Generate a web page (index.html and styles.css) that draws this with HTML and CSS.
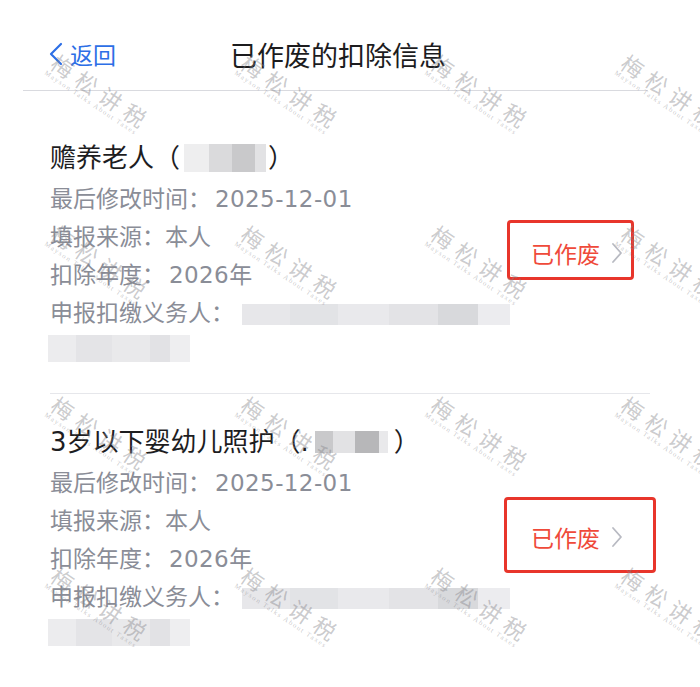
FILE: index.html
```html
<!DOCTYPE html>
<html lang="zh-CN">
<head>
    <meta charset="UTF-8">
    <meta name="viewport" content="width=device-width, initial-scale=1.0">
    <title>已作废的扣除信息</title>
    <link rel="stylesheet" href="styles.css">
</head>
<body>
    <div class="screen">
        <header class="nav">
            <a class="back" href="#">
                <svg class="back-icon" width="16" height="24" viewBox="0 0 16 24">
                    <polyline points="13,2 3,12 13,22" fill="none" stroke="currentColor" stroke-width="2.2" stroke-linecap="round" stroke-linejoin="round"/>
                </svg>
                返回
            </a>
            <h1 class="nav-title">已作废的扣除信息</h1>
        </header>

        <div class="list">
            <div class="item">
                <div class="info">
                    <div class="item-title">赡养老人（<span class="blur blur-name-a"></span>）</div>
                    <div class="meta first">最后修改时间：<span class="num">2025-12-01</span></div>
                    <div class="meta">填报来源：本人</div>
                    <div class="meta">扣除年度：<span class="num">2026</span>年</div>
                    <div class="meta">申报扣缴义务人：<span class="blur blur-agent"></span></div>
                    <div class="blur blur-agent-2"></div>
                </div>
                <div class="status">
                    <span>已作废</span>
                    <svg class="chevron" width="12" height="22" viewBox="0 0 12 22">
                        <polyline points="2,2 10,11 2,20" fill="none" stroke="currentColor" stroke-width="1.8" stroke-linecap="round" stroke-linejoin="round"/>
                    </svg>
                    <i class="mark mark-a"></i>
                </div>
            </div>

            <div class="item">
                <div class="info">
                    <div class="item-title">3岁以下婴幼儿照护（.<span class="blur blur-name-b"></span>）</div>
                    <div class="meta first">最后修改时间：<span class="num">2025-12-01</span></div>
                    <div class="meta">填报来源：本人</div>
                    <div class="meta">扣除年度：<span class="num">2026</span>年</div>
                    <div class="meta">申报扣缴义务人：<span class="blur blur-agent"></span></div>
                    <div class="blur blur-agent-2"></div>
                </div>
                <div class="status">
                    <span>已作废</span>
                    <svg class="chevron" width="12" height="22" viewBox="0 0 12 22">
                        <polyline points="2,2 10,11 2,20" fill="none" stroke="currentColor" stroke-width="1.8" stroke-linecap="round" stroke-linejoin="round"/>
                    </svg>
                    <i class="mark mark-b"></i>
                </div>
            </div>
        </div>

        <!-- watermark layer -->
        <div class="watermarks">
            <div class="wm"><b>梅松讲税</b><small>Mayson Talks About Taxes</small></div>
            <div class="wm"><b>梅松讲税</b><small>Mayson Talks About Taxes</small></div>
            <div class="wm"><b>梅松讲税</b><small>Mayson Talks About Taxes</small></div>
            <div class="wm"><b>梅松讲税</b><small>Mayson Talks About Taxes</small></div>
            <div class="wm"><b>梅松讲税</b><small>Mayson Talks About Taxes</small></div>
            <div class="wm"><b>梅松讲税</b><small>Mayson Talks About Taxes</small></div>
            <div class="wm"><b>梅松讲税</b><small>Mayson Talks About Taxes</small></div>
            <div class="wm"><b>梅松讲税</b><small>Mayson Talks About Taxes</small></div>
            <div class="wm"><b>梅松讲税</b><small>Mayson Talks About Taxes</small></div>
            <div class="wm"><b>梅松讲税</b><small>Mayson Talks About Taxes</small></div>
            <div class="wm"><b>梅松讲税</b><small>Mayson Talks About Taxes</small></div>
            <div class="wm"><b>梅松讲税</b><small>Mayson Talks About Taxes</small></div>
            <div class="wm"><b>梅松讲税</b><small>Mayson Talks About Taxes</small></div>
            <div class="wm"><b>梅松讲税</b><small>Mayson Talks About Taxes</small></div>
            <div class="wm"><b>梅松讲税</b><small>Mayson Talks About Taxes</small></div>
            <div class="wm"><b>梅松讲税</b><small>Mayson Talks About Taxes</small></div>
        </div>
    </div>
</body>
</html>
```

FILE: styles.css
```css
* {
    margin: 0;
    padding: 0;
    box-sizing: border-box;
}

body {
    font-family: "Noto Sans CJK SC", "Noto Sans", sans-serif;
    background-color: #fff;
}

.screen {
    position: relative;
    width: 700px;
    height: 687px;
    overflow: hidden;
    background-color: #fff;
}

/* top bar */
.nav {
    display: flex;
    align-items: center;
    height: 91px;
    margin: 0 52px 0 23px;
    padding: 18px 0 0 25px;
    border-bottom: 1px solid #d9dadf;
}

.back {
    display: flex;
    align-items: center;
    color: #2d6fe6;
    font-size: 23px;
    text-decoration: none;
}

.back-icon {
    margin-right: 6px;
}

.nav-title {
    margin-left: 114px;
    font-size: 27px;
    font-weight: 400;
    color: #1c1c1e;
}

/* list */
.list {
    padding-top: 19px;
}

.item {
    display: flex;
    align-items: center;
    justify-content: space-between;
    margin: 0 50px;
    padding: 28px 27px 31px 0;
    border-bottom: 1px solid #e6e7eb;
}

.item:last-child {
    border-bottom: none;
}

/* wide latin digits, CJK falls through to Noto */
.item-title,
.meta {
    font-family: "DejaVu Sans", "Noto Sans CJK SC", sans-serif;
}

.item-title {
    font-size: 26px;
    line-height: 40px;
    color: #1d1d1f;
}

.meta {
    font-size: 23px;
    line-height: 38px;
    color: #8a8d97;
}

.meta.first {
    margin-top: 2px;
}

.num {
    margin-left: 4px;
    letter-spacing: 0.4px;
}

/* pixelated private fields */
.blur {
    display: inline-block;
    vertical-align: middle;
}

.blur-name-a {
    width: 82px;
    height: 28px;
    margin: -4px 2px 0 4px;
    background: linear-gradient(90deg, #eeeeef 0 30%, #dadadc 30% 58%, #c9c9cb 58% 86%, #e2e2e4 86%);
}

.blur-name-b {
    width: 73px;
    height: 22px;
    margin: -4px 6px 0 6px;
    background: linear-gradient(90deg, #c9c9cb 0 25%, #e2e2e4 25% 55%, #b7b7b9 55% 88%, #e9e9eb 88%);
}

.blur-agent {
    width: 268px;
    height: 21px;
    margin-left: 8px;
    background: linear-gradient(90deg, #e7e7ea 0 18%, #e2e3e6 18% 36%, #e9e9ec 36% 55%, #e3e3e6 55% 73%, #d8d9dc 73% 88%, #ececef 88%);
}

.blur-agent-2 {
    display: block;
    width: 142px;
    height: 27px;
    margin: 3px 0 0 -2px;
    background: linear-gradient(90deg, #ececee 0 20%, #e4e4e7 20% 45%, #e9e9eb 45% 72%, #e2e2e5 72% 86%, #eeeef0 86%);
}

/* status */
.status {
    position: relative;
    display: flex;
    align-items: center;
    margin-top: 6px;
    font-size: 23px;
    line-height: 30px;
    color: #ef4a3a;
}

.chevron {
    margin-left: 11px;
    color: #b8bac2;
}

.mark {
    position: absolute;
    border: 3px solid #e8352b;
    border-radius: 4px;
}

.mark-a {
    left: -24px;
    top: -18px;
    width: 127px;
    height: 60px;
}

.mark-b {
    left: -27px;
    top: -25px;
    width: 152px;
    height: 76px;
}

/* watermark */
.watermarks {
    position: absolute;
    inset: 0;
    display: grid;
    grid-template-columns: repeat(4, 190px);
    grid-auto-rows: 171px;
    padding: 8px 0 0 2px;
    pointer-events: none;
}

.wm {
    display: flex;
    flex-direction: column;
    align-items: center;
    justify-content: center;
    transform: rotate(34deg);
    color: rgba(130, 130, 135, 0.42);
}

.wm b {
    font-size: 22px;
    font-weight: 400;
    letter-spacing: 7px;
    line-height: 24px;
    margin-left: 7px;
}

.wm small {
    font-family: "Liberation Serif", serif;
    font-size: 7px;
    letter-spacing: 1.4px;
    line-height: 9px;
}
```
